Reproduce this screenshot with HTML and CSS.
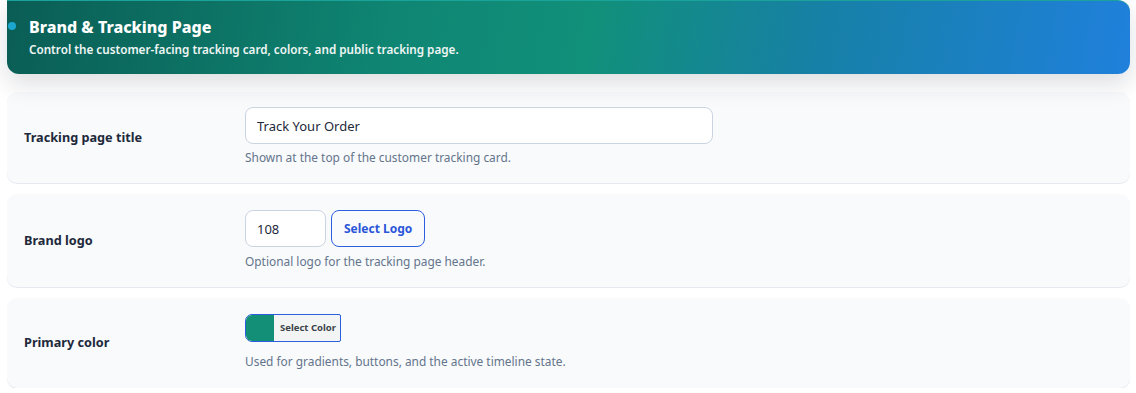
FILE: index.html
```html
<!DOCTYPE html>
<html lang="en">
<head>
  <meta charset="UTF-8" />
  <meta name="viewport" content="width=device-width, initial-scale=1.0"/>
  <title>Brand &amp; Tracking Page</title>
  <link rel="stylesheet" href="styles.css">
</head>
<body>

  <div class="page">
    <div class="hero">
      <span class="hero-dot"></span>
      <h1 class="hero-title">Brand &amp; Tracking Page</h1>
      <p class="hero-sub">Control the customer-facing tracking card, colors, and public tracking page.</p>
    </div>

    <div class="setting">
      <div class="setting-label">Tracking page title</div>
      <div class="setting-field">
        <input class="text-input wide" type="text" value="Track Your Order">
        <p class="help">Shown at the top of the customer tracking card.</p>
      </div>
    </div>

    <div class="setting">
      <div class="setting-label">Brand logo</div>
      <div class="setting-field">
        <div class="field-row">
          <input class="text-input small" type="text" value="108">
          <button class="outline-button">Select Logo</button>
        </div>
        <p class="help help-logo">Optional logo for the tracking page header.</p>
      </div>
    </div>

    <div class="setting setting-last">
      <div class="setting-label">Primary color</div>
      <div class="setting-field">
        <button class="color-button">
          <span class="color-swatch"></span>
          <span class="color-text">Select Color</span>
        </button>
        <p class="help help-color">Used for gradients, buttons, and the active timeline state.</p>
      </div>
    </div>
  </div>

</body>
</html>
```

FILE: styles.css
```css
body {
  margin: 0;
  background-color: #ffffff;
  font-family: "Noto Sans", "Open Sans", sans-serif;
  color: #1e293b;
}

.page {
  margin: 0 6px 0 7px;
  display: flex;
  flex-direction: column;
  gap: 11px;
}

.hero {
  position: relative;
  height: 74px;
  box-sizing: border-box;
  padding: 15px 22px 0;
  border-radius: 0 12px 12px 12px;
  border-top: 1px solid #1aa39a;
  background: linear-gradient(100deg, #0a5d55 0%, #0f8673 35%, #11907a 52%, #1780a6 72%, #2080dc 100%);
  box-shadow: 0 10px 24px rgba(15, 23, 42, 0.14);
  color: white;
  margin-bottom: 7px;
}

.hero-dot {
  position: absolute;
  left: 1px;
  top: 21px;
  width: 8px;
  height: 8px;
  border-radius: 50%;
  background-color: #1aa6cf;
}

.hero-title {
  margin: 0;
  font-size: 16px;
  font-weight: 800;
  line-height: 23px;
}

.hero-sub {
  margin: 2px 0 0;
  font-size: 11.7px;
  font-weight: 600;
  line-height: 17px;
  color: #eef6f4;
}

.setting {
  display: grid;
  grid-template-columns: 221px 1fr;
  align-items: center;
  padding: 15px 17px 17px;
  background-color: #f8fafc;
  border-radius: 10px;
  box-shadow: 0 1px 0 #e5e9ef;
}

.setting-last {
  padding-bottom: 18px;
}

.setting-label {
  font-size: 12.7px;
  font-weight: 700;
  color: #1e293b;
}

.setting-field {
  display: flex;
  flex-direction: column;
  align-items: flex-start;
}

.field-row {
  display: flex;
  gap: 5px;
  margin-top: 1px;
}

.text-input {
  height: 37px;
  box-sizing: border-box;
  padding: 0 11px;
  border: 1px solid #cbd5e1;
  border-radius: 8px;
  background-color: white;
  font-family: inherit;
  font-size: 13px;
  color: #1e293b;
}

.text-input.wide { width: 468px; }
.text-input.small { width: 81px; }

.outline-button {
  height: 37px;
  padding: 0 12px;
  border: 1px solid #2b5ee0;
  border-radius: 8px;
  background-color: transparent;
  color: #2a55d8;
  font-family: inherit;
  font-size: 12px;
  font-weight: 700;
}

.color-button {
  display: flex;
  height: 28px;
  width: 96px;
  margin-top: 1px;
  padding: 0;
  border: 1px solid #2b5ee0;
  border-radius: 7px 2px 2px 7px;
  background-color: #f3f5f4;
  overflow: hidden;
  font-family: inherit;
}

.color-swatch {
  width: 28px;
  height: 100%;
  background-color: #128f76;
}

.color-text {
  padding-left: 6px;
  font-size: 9.5px;
  font-weight: 700;
  line-height: 26px;
  color: #3c434a;
}

.help {
  margin: 5px 0 0;
  font-size: 11.9px;
  line-height: 17px;
  color: #64748b;
}

.help-logo {
  margin-top: 6px;
}

.help-color {
  margin-top: 11px;
}
```
